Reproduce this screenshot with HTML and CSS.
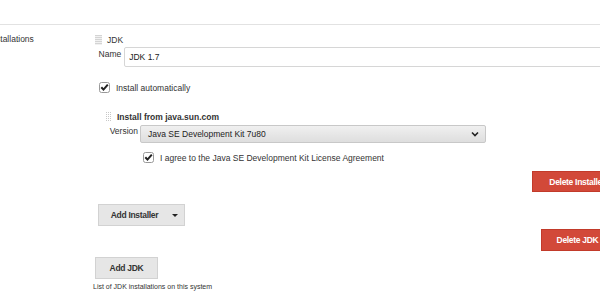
FILE: index.html
```html
<!DOCTYPE html>
<html>
<head>
  <title>JDK installations</title>
  <link rel="stylesheet" href="styles.css">
</head>
<body>
  <div class="viewport">
    <div class="topbar"></div>
    <div class="setting">
      <div class="setting-name"><span>JDK installations</span></div>
      <div class="setting-main">
        <div class="repeated">
          <div class="repeat-head">
            <span class="handle"></span>
            <span>JDK</span>
          </div>
          <div class="field-row">
            <label class="field-label name-label" for="jdk-name">Name</label>
            <input type="text" id="jdk-name" class="text-box" value="JDK 1.7">
          </div>
          <div class="check-row auto-row">
            <span class="check"><svg width="11" height="11" viewBox="0 0 11 11"><rect x="0.5" y="0.5" width="10" height="10" rx="2" fill="#fff" stroke="#999"/><polyline points="2.3,5.2 4.5,7.6 8.8,2.6" fill="none" stroke="#222" stroke-width="2"/></svg></span>
            <span>Install automatically</span>
          </div>

          <div class="installer">
            <div class="repeat-head installer-head">
              <span class="handle dots"></span>
              <b>Install from java.sun.com</b>
            </div>
            <div class="field-row version-row">
              <label class="field-label version-label">Version</label>
              <div class="select-box">
                <span>Java SE Development Kit 7u80</span>
                <svg width="8" height="6" viewBox="0 0 8 6"><polyline points="1,1.5 4,4.5 7,1.5" fill="none" stroke="#222" stroke-width="1.6"/></svg>
              </div>
            </div>
            <div class="check-row agree-row">
              <span class="check"><svg width="11" height="11" viewBox="0 0 11 11"><rect x="0.5" y="0.5" width="10" height="10" rx="2" fill="#fff" stroke="#999"/><polyline points="2.3,5.2 4.5,7.6 8.8,2.6" fill="none" stroke="#222" stroke-width="2"/></svg></span>
              <span>I agree to the Java SE Development Kit License Agreement</span>
            </div>
            <div class="button-row right">
              <button type="button" class="btn danger del-installer">Delete Installer</button>
            </div>
          </div>

          <div class="button-row">
            <button type="button" class="btn add-installer">Add Installer <span class="caret"></span></button>
          </div>
          <div class="button-row right">
            <button type="button" class="btn danger del-jdk">Delete JDK</button>
          </div>
        </div>
        <div class="button-row">
          <button type="button" class="btn add-jdk">Add JDK</button>
        </div>
        <p class="help">List of JDK installations on this system</p>
      </div>
    </div>
  </div>
</body>
</html>
```

FILE: styles.css
```css
html, body {
  margin: 0;
  padding: 0;
  background: #fff;
}
body {
  font-family: "Liberation Sans", Arial, sans-serif;
  font-size: 8.5px;
  color: #333;
}
.viewport {
  width: 600px;
  height: 296px;
  overflow: hidden;
}
.topbar {
  height: 24px;
  border-bottom: 1px solid #e2e2e2;
}
.setting {
  display: flex;
  width: 660px;
}
.setting-name {
  width: 93px;
  flex-shrink: 0;
  white-space: nowrap;
  padding-top: 9px;
}
.setting-name span {
  margin-left: -29px;
}
.setting-main {
  flex: 1;
}
.repeated {
  width: 521px;
}
.repeat-head {
  display: flex;
  align-items: center;
  gap: 5px;
  margin-top: 9px;
  height: 11px;
  padding-left: 2px;
}
.handle {
  display: inline-block;
  width: 7px;
  height: 10px;
  background: repeating-linear-gradient(#d4d4d4 0 1px, #f1f1f1 1px 2px);
}
.handle.dots {
  background: linear-gradient(90deg, #fff 1px, transparent 1px) 0 0 / 2px 2px,
              repeating-linear-gradient(#c8c8c8 0 1px, #fff 1px 2px);
}
.field-row {
  display: flex;
  margin-top: 2px;
}
.field-label {
  text-align: right;
  padding-top: 2px;
}
.name-label {
  width: 30px;
  margin-right: 3px;
}
.text-box {
  width: 520px;
  height: 20px;
  box-sizing: border-box;
  border: 1px solid #d6d6d6;
  border-radius: 2px;
  padding: 0 4px;
  font-family: inherit;
  font-size: 8.5px;
  color: #222;
}
.check-row {
  display: flex;
  align-items: center;
  gap: 6px;
}
.check {
  display: flex;
}
.auto-row {
  margin-top: 15px;
  padding-left: 6px;
}
.installer {
  margin-left: 12px;
}
.installer-head {
  margin-top: 18px;
  padding-left: 0;
}
.version-row {
  margin-top: 3px;
}
.version-label {
  width: 33px;
  margin-right: 2px;
  padding-top: 1px;
}
.select-box {
  width: 346px;
  height: 18px;
  box-sizing: border-box;
  border: 1px solid #c8c8c8;
  border-radius: 2px;
  background: linear-gradient(#f0f0f0, #dedede);
  display: flex;
  align-items: center;
  justify-content: space-between;
  padding: 0 6px 0 7px;
  color: #222;
}
.agree-row {
  margin-top: 9px;
  padding-left: 38px;
}
.button-row {
  display: flex;
}
.button-row.right {
  justify-content: flex-end;
}
.btn {
  font-family: inherit;
  font-size: 8.5px;
  letter-spacing: -0.3px;
  font-weight: bold;
  border: 1px solid #d2d2d2;
  background: #e6e6e6;
  color: #333;
  height: 22px;
  padding: 0 16px;
  border-radius: 0;
  white-space: nowrap;
}
.danger {
  background: #d24939;
  border-color: #c23a2a;
  color: #fff;
}
.del-installer {
  margin-top: 8px;
  height: 21px;
  margin-right: -8px;
}
.add-installer {
  margin-top: 12px;
  margin-left: 5px;
  width: 87px;
  display: flex;
  align-items: center;
  justify-content: center;
  gap: 14px;
  padding: 0 0 0 6px;
}
.caret {
  width: 0;
  height: 0;
  border-left: 3px solid transparent;
  border-right: 3px solid transparent;
  border-top: 3px solid #222;
}
.del-jdk {
  margin-top: 3px;
  width: 73px;
  padding: 0;
}
.add-jdk {
  margin-top: 6px;
  margin-left: 2px;
  width: 63px;
  padding: 0;
}
.help {
  margin: 4px 0 0;
  font-size: 7px;
}
```
